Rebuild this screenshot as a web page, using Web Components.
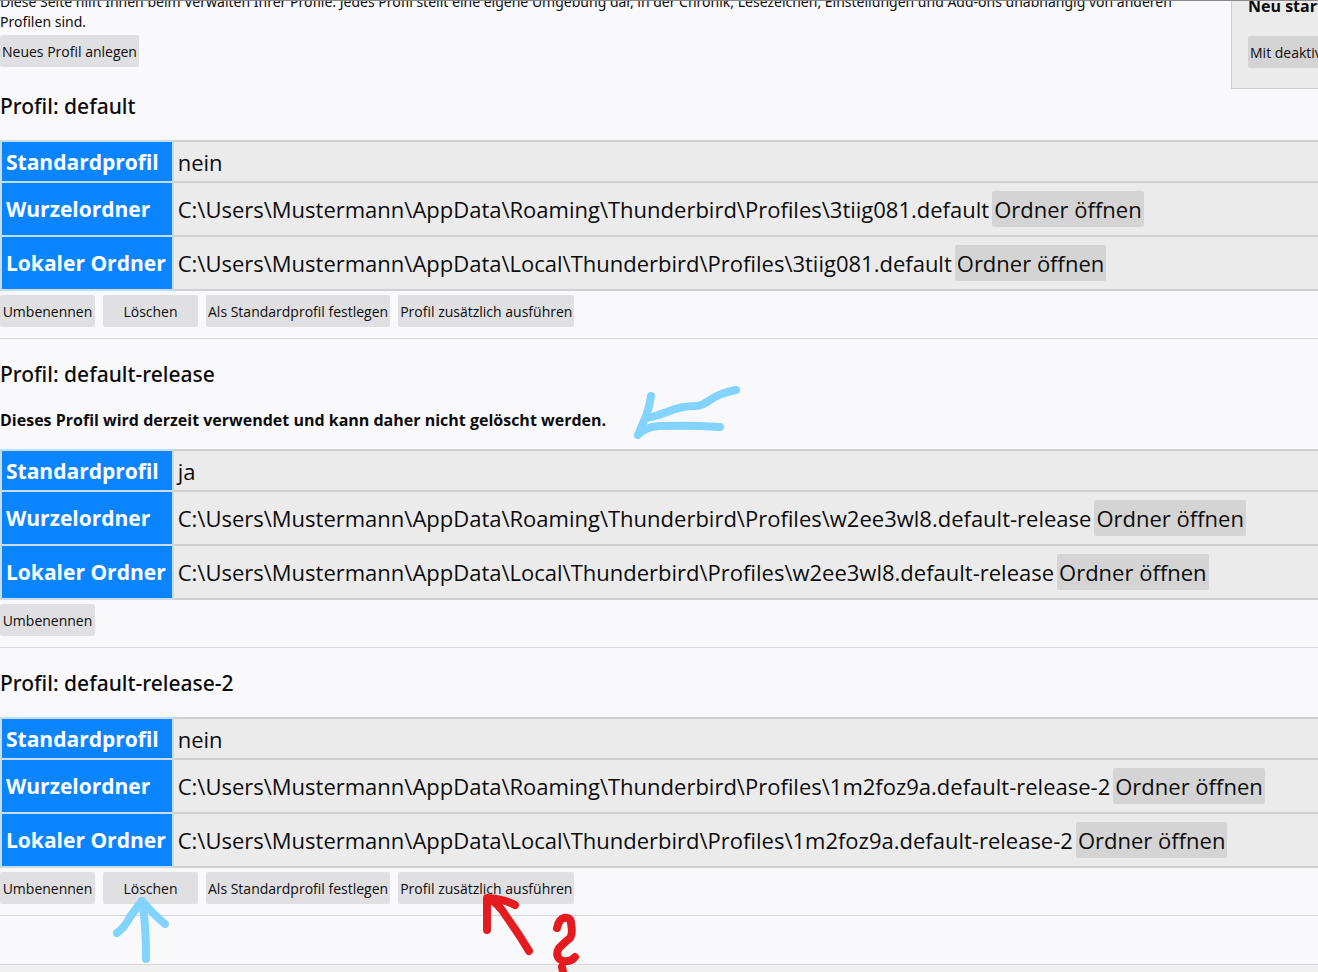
<!DOCTYPE html>
<html lang="de">
<head>
<meta charset="utf-8">
<title>Über Profile</title>
<style>
	body {
		margin: 0;
		background: #f9f9fb;
		color: #0c0c0d;
		font-family: "Open Sans", "Noto Sans", sans-serif;
		font-size: 14px;
	}
</style>
</head>
<body>
<profiles-page>
	<profiles-header slot="header">Diese Seite hilft Ihnen beim Verwalten Ihrer Profile. Jedes Profil stellt eine eigene Umgebung dar, in der Chronik, Lesezeichen, Einstellungen und Add-ons unabhängig von anderen Profilen sind.</profiles-header>
	<profile-entry name="default" root="3tiig081.default"></profile-entry>
	<profile-entry name="default-release" root="w2ee3wl8.default-release" current>Dieses Profil wird derzeit verwendet und kann daher nicht gelöscht werden.</profile-entry>
	<profile-entry name="default-release-2" root="1m2foz9a.default-release-2"></profile-entry>
	<pen-marks slot="marks"></pen-marks>
</profiles-page>

<script>
(function() {
	function attach(element, html) {
		let template = document.createElement("template");
		template.innerHTML = html;
		element.attachShadow({mode: "open"}).appendChild(template.content.cloneNode(true));
	}

	class ActionButton extends HTMLElement {
		constructor() {
			super();
			attach(this, `
				<button type="button"><slot></slot></button>
				<style>
				:host {
					display: inline-block;
				}
				button {
					display: block;
					width: 100%;
					height: 32px;
					padding: 0 2px;
					border: 0;
					border-radius: 2px;
					background: #e0e0e2;
					color: inherit;
					font: inherit;
					font-size: 14px;
					white-space: nowrap;
				}
				:host([dark]) button {
					background: #d4d4d4;
				}
				:host([large]) button {
					height: 36px;
					font-size: 22px;
				}
				button:hover {
					background: #c7c7c9;
				}
				</style>
			`);
		}
	}

	class ProfilesHeader extends HTMLElement {
		constructor() {
			super();
			attach(this, `
				<aside>
					<h3>Neu starten</h3>
					<action-button dark>Mit deaktivierten Add-ons neu starten</action-button>
				</aside>
				<p><slot></slot></p>
				<action-button>Neues Profil anlegen</action-button>
				<style>
				:host {
					display: block;
					margin-top: -9px;
					padding-bottom: 4px;
				}
				aside {
					float: right;
					box-sizing: border-box;
					width: 87px;
					margin-left: 48px;
					padding: 2px 0 20px 16px;
					border: solid #cfcfd1;
					border-width: 0 0 1px 1px;
					background: #ebebeb;
					overflow: hidden;
					white-space: nowrap;
				}
				h3 {
					margin: 0 0 18px;
					font-size: 16px;
					line-height: 24px;
				}
				aside action-button {
					display: block;
					width: max-content;
				}
				p {
					margin: 0 0 3px;
					font-family: "Noto Sans", "Open Sans", sans-serif;
					line-height: 20px;
				}
				</style>
			`);
		}
	}

	class ProfileEntry extends HTMLElement {
		constructor() {
			super();
			let current = this.hasAttribute("current");
			let base = "C:\\Users\\Mustermann\\AppData\\";
			let folder = "\\Thunderbird\\Profiles\\" + this.getAttribute("root");
			attach(this, `
				<h2>Profil: ${this.getAttribute("name")}</h2>
				${current ? "<p><slot></slot></p>" : ""}
				<table>
					<tr><th scope="row">Standardprofil</th><td>${current ? "ja" : "nein"}</td></tr>
					<tr class="folder"><th scope="row">Wurzelordner</th><td><div><span>${base}Roaming${folder}</span><action-button dark large>Ordner öffnen</action-button></div></td></tr>
					<tr class="folder"><th scope="row">Lokaler Ordner</th><td><div><span>${base}Local${folder}</span><action-button dark large>Ordner öffnen</action-button></div></td></tr>
				</table>
				<div class="actions">
					<action-button>Umbenennen</action-button>
					${current ? "" : `
					<action-button>Löschen</action-button>
					<action-button>Als Standardprofil festlegen</action-button>
					<action-button>Profil zusätzlich ausführen</action-button>`}
				</div>
				<style>
				:host {
					display: block;
					padding-top: 21px;
					border-bottom: 1px solid #d7d7db;
				}
				h2 {
					margin: 0 0 20px;
					font-family: "Noto Sans", "Open Sans", sans-serif;
					font-size: 21px;
					font-weight: 500;
					line-height: 28px;
				}
				p {
					margin: 0 0 17px;
					font-size: 16px;
					font-weight: bold;
					line-height: 24px;
				}
				table {
					width: 100%;
					border-collapse: collapse;
					font-size: 22px;
					line-height: 28px;
				}
				th, td {
					box-sizing: border-box;
					height: 41px;
					padding: 0 4px;
					border: 2px solid #d0d0d0;
					text-align: left;
					white-space: nowrap;
				}
				td {
					width: 100%;
					border-right: 0;
					background: #ebebeb;
				}
				th {
					padding-right: 6px;
					border-color: #c3dcee;
					background: #0a84ff;
					color: #fff;
					font-size: 21px;
				}
				.folder > * {
					height: 54px;
				}
				td div {
					display: flex;
					align-items: center;
					gap: 3px;
				}
				.actions {
					display: flex;
					gap: 8px;
					padding: 4px 0 11px;
				}
				.actions action-button {
					min-width: 95px;
				}
				</style>
			`);
		}
	}

	class PenMarks extends HTMLElement {
		constructor() {
			super();
			attach(this, `
				<svg width="1318" height="972" viewBox="0 0 1318 972" aria-hidden="true">
					<g class="blue">
						<path d="M651 396Q649 408 646 416L638 435Q645 427 659 426Q690 425 720 427"/>
						<path d="M736 390Q720 393 710 400Q702 406 695 406Q681 406 667 412Q657 416 647 418"/>
						<path d="M117 933Q125 927 130 917L142 901Q154 915 165 924M142 901Q146 923 146 959"/>
					</g>
					<g class="red">
						<path d="M487 930V898Q504 899 515 905M488 898Q499 904 506 916Q519 934 529 951"/>
						<path d="M557 928Q559 919 564 918Q571 917 571 923Q573 934 570 938Q564 943 559 948C555 955 558 960 564 961Q571 962 575 957M562 967L564 976"/>
					</g>
				</svg>
				<style>
				:host {
					position: absolute;
					top: -1px;
					left: 0;
					pointer-events: none;
				}
				svg {
					display: block;
				}
				path {
					fill: none;
					stroke-width: 8px;
					stroke-linecap: round;
					stroke-linejoin: round;
				}
				.blue {
					stroke: #82d4ff;
				}
				.red {
					stroke: #e51c1f;
				}
				</style>
			`);
		}
	}

	class ProfilesPage extends HTMLElement {
		constructor() {
			super();
			attach(this, `
				<main>
					<slot name="header"></slot>
					<slot></slot>
				</main>
				<footer></footer>
				<slot name="marks"></slot>
				<style>
				:host {
					display: flex;
					flex-direction: column;
					position: relative;
					box-sizing: border-box;
					height: 100vh;
					border-top: 1px solid #8a8a8a;
					overflow: hidden;
				}
				main {
					flex: 1;
					min-height: 0;
					overflow: hidden;
				}
				footer {
					height: 7px;
					border-top: 1px solid #d7d7db;
					background: #f0f0f0;
				}
				</style>
			`);
		}
	}

	customElements.define("action-button", ActionButton);
	customElements.define("profiles-header", ProfilesHeader);
	customElements.define("profile-entry", ProfileEntry);
	customElements.define("pen-marks", PenMarks);
	customElements.define("profiles-page", ProfilesPage);
})();
</script>
</body>
</html>
